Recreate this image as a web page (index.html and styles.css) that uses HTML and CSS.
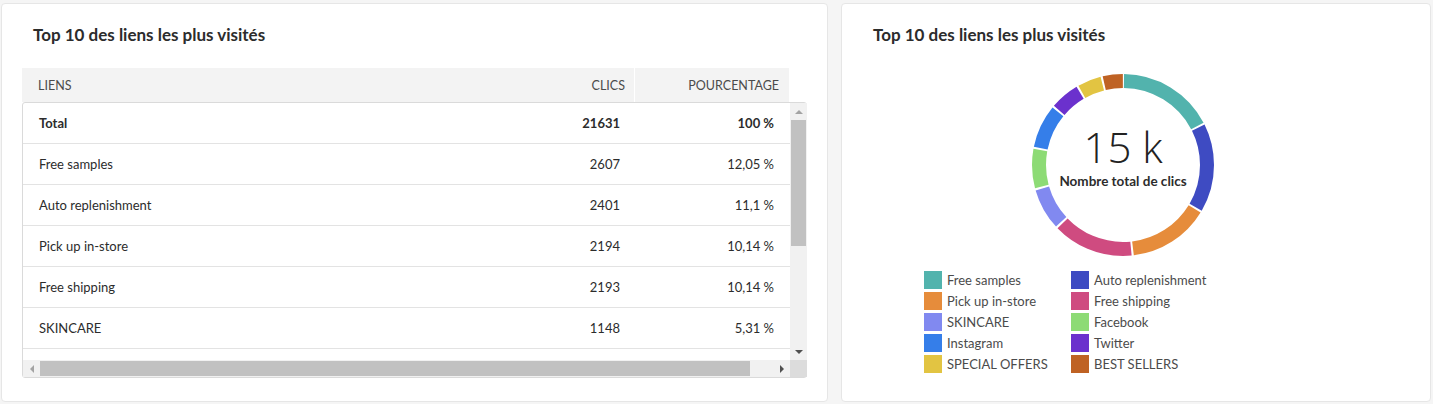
FILE: index.html
```html
<!DOCTYPE html>
<html lang="fr">
<head>
<meta charset="utf-8">
<title>Top 10 des liens</title>
<link rel="stylesheet" href="styles.css">
</head>
<body>
<div class="page">
  <section class="card card-table">
    <h2 class="card-title">Top 10 des liens les plus visités</h2>
    <div class="table">
      <div class="thead">
        <div class="th th-link">LIENS</div>
        <div class="th th-num">CLICS</div>
        <div class="th th-pct">POURCENTAGE</div>
      </div>
      <div class="scrollbox">
        <div class="viewport">
          <div class="row row-total">
            <div class="td td-link">Total</div><div class="td td-num">21631</div><div class="td td-pct">100 %</div>
          </div>
          <div class="row">
            <div class="td td-link">Free samples</div><div class="td td-num">2607</div><div class="td td-pct">12,05 %</div>
          </div>
          <div class="row">
            <div class="td td-link">Auto replenishment</div><div class="td td-num">2401</div><div class="td td-pct">11,1 %</div>
          </div>
          <div class="row">
            <div class="td td-link">Pick up in-store</div><div class="td td-num">2194</div><div class="td td-pct">10,14 %</div>
          </div>
          <div class="row">
            <div class="td td-link">Free shipping</div><div class="td td-num">2193</div><div class="td td-pct">10,14 %</div>
          </div>
          <div class="row">
            <div class="td td-link">SKINCARE</div><div class="td td-num">1148</div><div class="td td-pct">5,31 %</div>
          </div>
          <div class="row row-empty"></div>
        </div>
        <div class="vbar">
          <div class="arrow arrow-up"></div>
          <div class="vtrack"><div class="vthumb"></div></div>
          <div class="arrow arrow-down"></div>
        </div>
        <div class="hbar">
          <div class="arrow arrow-left"></div>
          <div class="htrack"><div class="hthumb"></div></div>
          <div class="arrow arrow-right"></div>
        </div>
        <div class="corner"></div>
      </div>
    </div>
  </section>

  <section class="card card-chart">
    <h2 class="card-title">Top 10 des liens les plus visités</h2>
    <div class="donut">
      <svg class="donut-svg" width="182" height="182" viewBox="0 0 182 182">
        <g transform="rotate(-90 91 91)" fill="none" stroke-width="14">
          <circle cx="91" cy="91" r="84" stroke="#52b3ad" stroke-dasharray="90.08 527.79" stroke-dashoffset="-1"/>
          <circle cx="91" cy="91" r="84" stroke="#3e4bc2" stroke-dasharray="82.80 527.79" stroke-dashoffset="-93.08"/>
          <circle cx="91" cy="91" r="84" stroke="#e68c3b" stroke-dasharray="75.49 527.79" stroke-dashoffset="-177.88"/>
          <circle cx="91" cy="91" r="84" stroke="#cf4b80" stroke-dasharray="75.46 527.79" stroke-dashoffset="-255.37"/>
          <circle cx="91" cy="91" r="84" stroke="#8189f0" stroke-dasharray="38.55 527.79" stroke-dashoffset="-332.83"/>
          <circle cx="91" cy="91" r="84" stroke="#8ddb75" stroke-dasharray="36.85 527.79" stroke-dashoffset="-373.38"/>
          <circle cx="91" cy="91" r="84" stroke="#357ee9" stroke-dasharray="40.38 527.79" stroke-dashoffset="-412.23"/>
          <circle cx="91" cy="91" r="84" stroke="#6b31cd" stroke-dasharray="27.32 527.79" stroke-dashoffset="-454.61"/>
          <circle cx="91" cy="91" r="84" stroke="#e2c442" stroke-dasharray="22.02 527.79" stroke-dashoffset="-483.93"/>
          <circle cx="91" cy="91" r="84" stroke="#bf6224" stroke-dasharray="18.84 527.79" stroke-dashoffset="-507.95"/>
        </g>
      </svg>
      <div class="donut-label">
        <div class="donut-value">15 k</div>
        <div class="donut-caption">Nombre total de clics</div>
      </div>
    </div>
    <ul class="legend">
      <li><span class="sw c1"></span>Free samples</li>
      <li><span class="sw c2"></span>Auto replenishment</li>
      <li><span class="sw c3"></span>Pick up in-store</li>
      <li><span class="sw c4"></span>Free shipping</li>
      <li><span class="sw c5"></span>SKINCARE</li>
      <li><span class="sw c6"></span>Facebook</li>
      <li><span class="sw c7"></span>Instagram</li>
      <li><span class="sw c8"></span>Twitter</li>
      <li><span class="sw c9"></span>SPECIAL OFFERS</li>
      <li><span class="sw c10"></span>BEST SELLERS</li>
    </ul>
  </section>
</div>
</body>
</html>
```

FILE: styles.css
```css
* { box-sizing: border-box; }
html, body { margin: 0; padding: 0; }
body {
  background: #f5f5f5;
  font-family: Lato, "Open Sans", sans-serif;
  color: #2c2c2c;
  width: 1433px;
  height: 404px;
  overflow: hidden;
}
.page {
  display: flex;
  gap: 13px;
  padding: 3px 2px 2px 1px;
  height: 404px;
}
.card {
  background: #fff;
  border: 1px solid #e6e6e6;
  border-radius: 4px;
  height: 399px;
}
.card-table { width: 827px; padding: 0 0 0 20px; }
.card-chart { flex: 1; }
.card-title {
  margin: 0;
  padding: 20px 0 0 31px;
  height: 64px;
  font-size: 17px;
  font-weight: 700;
  color: #2c2c2c;
  line-height: 22px;
}
.card-table .card-title { padding-left: 11px; }

/* table */
.table { width: 785px; }
.thead {
  display: flex;
  width: 767px;
  height: 34px;
  background: #f3f3f3;
  font-size: 12.5px;
  color: #4b4b4b;
}
.th { display: flex; align-items: center; }
.th-link { flex: 1; padding-left: 16px; }
.th-num { width: 150px; justify-content: flex-end; padding-right: 9px; border-right: 1px solid #fff; }
.th-pct { width: 154px; justify-content: flex-end; padding-right: 10px; }

.scrollbox {
  display: grid;
  grid-template-columns: 767px 17px;
  grid-template-rows: 257px 17px;
  border: 1px solid #dadada;
  border-radius: 3px;
  width: 785px;
}
.viewport { overflow: hidden; }
.row {
  display: flex;
  height: 41px;
  border-bottom: 1px solid #e3e3e3;
  font-size: 13px;
  align-items: center;
}
.row-total { font-weight: 700; }
.td-link { flex: 1; padding-left: 16px; }
.td-num { width: 150px; text-align: right; padding-right: 16px; }
.td-pct { width: 154px; text-align: right; padding-right: 16px; }

.vbar {
  background: #f1f1f1;
  display: flex;
  flex-direction: column;
}
.vtrack { flex: 1; padding: 0 1px; }
.vthumb { background: #c1c1c1; height: 126px; }
.hbar {
  background: #f1f1f1;
  display: flex;
}
.htrack { flex: 1; padding: 1px 0; }
.hthumb { background: #c1c1c1; height: 15px; width: 710px; }
.corner { background: #dcdcdc; }
.arrow {
  width: 17px;
  height: 17px;
  display: flex;
  align-items: center;
  justify-content: center;
}
.arrow::before { content: ""; width: 0; height: 0; border: 4px solid transparent; }
.arrow-up::before { border-bottom-color: #a3a3a3; border-top-width: 0; }
.arrow-down::before { border-top-color: #505050; border-bottom-width: 0; }
.arrow-left::before { border-right-color: #a3a3a3; border-left-width: 0; }
.arrow-right::before { border-left-color: #505050; border-right-width: 0; }

/* donut */
.donut {
  position: relative;
  width: 182px;
  height: 182px;
  margin: 6px 0 0 190px;
}
.donut-svg { display: block; }
.donut-label {
  position: absolute;
  inset: 0;
  display: flex;
  flex-direction: column;
  align-items: center;
  justify-content: center;
  padding-bottom: 18px;
}
.donut-value {
  font-family: "Open Sans", sans-serif;
  font-weight: 300;
  font-size: 42px;
  line-height: 48px;
  color: #222;
}
.donut-caption {
  font-size: 13.5px;
  font-weight: 700;
  color: #2c2c2c;
  margin-top: 2px;
}
.legend {
  list-style: none;
  margin: 15px 0 0 82px;
  padding: 0;
  display: grid;
  grid-template-columns: 147px 160px;
  row-gap: 3px;
  font-size: 13px;
  color: #4b4b4b;
}
.legend li { display: flex; align-items: center; height: 18px; }
.sw { width: 18px; height: 18px; margin-right: 5px; flex: none; }
.c1 { background: #52b3ad; }
.c2 { background: #3e4bc2; }
.c3 { background: #e68c3b; }
.c4 { background: #cf4b80; }
.c5 { background: #8189f0; }
.c6 { background: #8ddb75; }
.c7 { background: #357ee9; }
.c8 { background: #6b31cd; }
.c9 { background: #e2c442; }
.c10 { background: #bf6224; }
```
